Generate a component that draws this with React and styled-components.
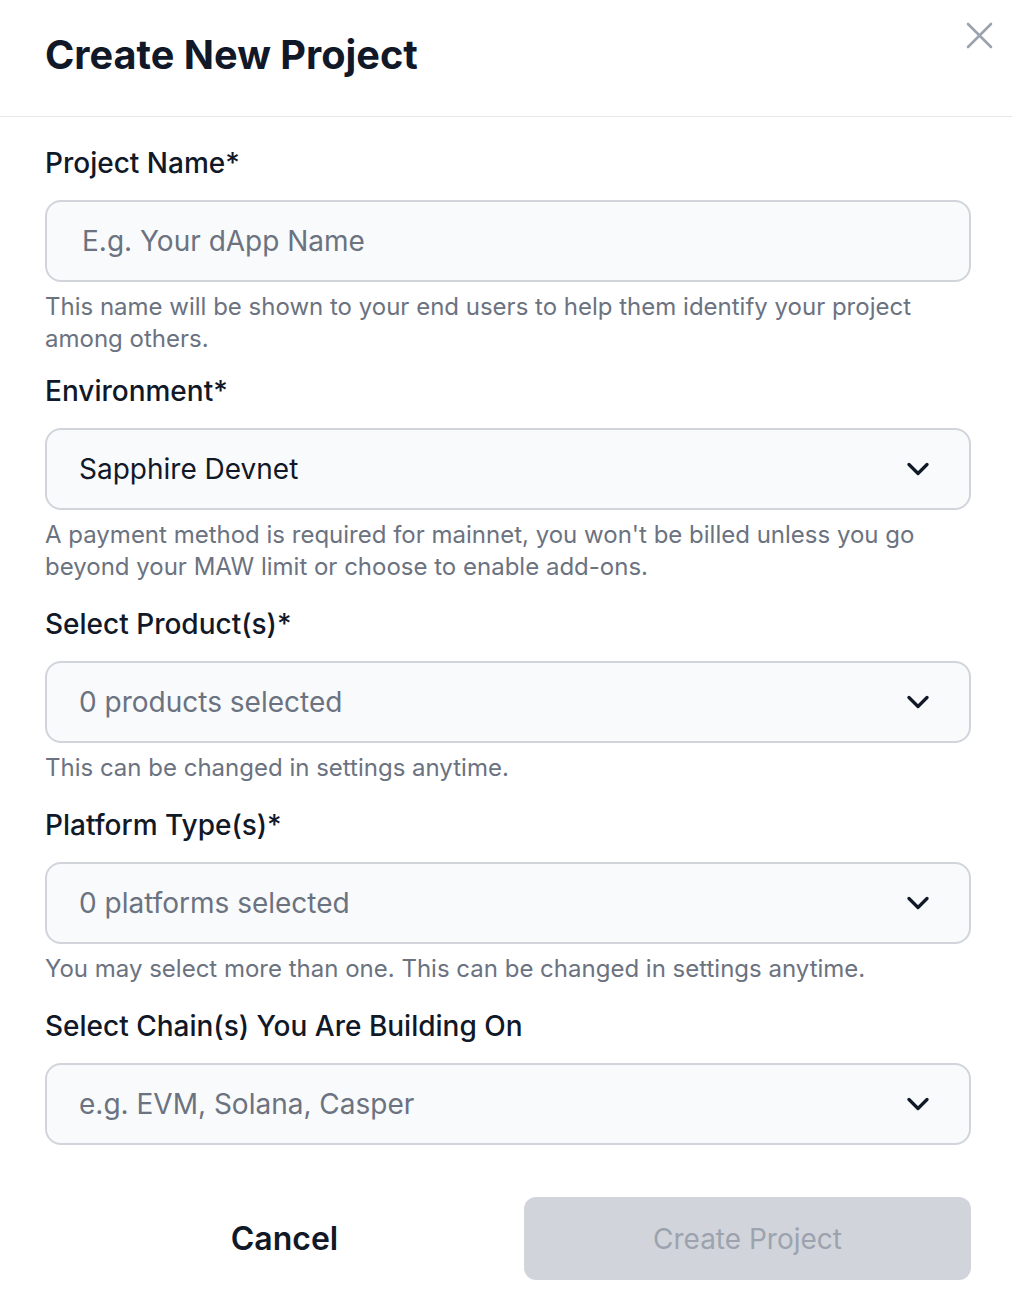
import React from 'react';
import styled, { createGlobalStyle } from 'styled-components';

const GlobalStyle = createGlobalStyle`
    body {
        margin: 0;
        background: #ffffff;
        font-family: Inter, "Noto Sans", sans-serif;
        color: #111827;
    }
`

const Modal = styled.div`
    width: 1012px;
    min-height: 1308px;
    background: #ffffff;
`

const Header = styled.header`
    height: 116px;
    border-bottom: 1px solid #e5e7eb;
    display: flex;
    justify-content: space-between;
    padding: 0 18px 0 45px;
    box-sizing: content-box;

    h1 {
        margin: 0 0 6px;
        align-self: center;
        font-size: 39.7px;
        line-height: 48px;
        font-weight: 700;
        color: #111827;
    }
`

const CloseButton = styled.button`
    margin-top: 21px;
    width: 29px;
    height: 29px;
    padding: 0;
    border: none;
    background: transparent;
    cursor: pointer;
    display: flex;
`

const Body = styled.div`
    padding: 30px 41px 0 45px;
    display: flex;
    flex-direction: column;
`

const Field = styled.div`
    display: flex;
    flex-direction: column;
    margin-bottom: ${({ $gap }) => $gap}px;
`

const Label = styled.label`
    font-size: 28px;
    line-height: 32px;
    font-weight: 500;
    color: #111827;
    margin-bottom: 21px;
`

const Box = styled.div`
    height: 82px;
    box-sizing: border-box;
    border: 2px solid #d1d5db;
    border-radius: 16px;
    background: #f9fafb;
    display: flex;
    align-items: center;
    justify-content: space-between;
    padding: 0 40px 0 ${({ $input }) => ($input ? 35 : 32)}px;
    font-size: 28px;
    color: ${({ $muted }) => ($muted ? '#6b7280' : '#111827')};
`

const Helper = styled.p`
    margin: 9px 0 0;
    font-size: 24px;
    line-height: 32px;
    color: #6b7280;
`

const Actions = styled.div`
    display: grid;
    grid-template-columns: 479px 447px;
    margin-top: 52px;
    height: 83px;
`

const Button = styled.button`
    border: none;
    border-radius: 12px;
    font-family: inherit;
    font-size: ${({ $primary }) => ($primary ? 28 : 32)}px;
    font-weight: ${({ $primary }) => ($primary ? 400 : 600)};
    background: ${({ $primary }) => ($primary ? '#d1d5db' : 'transparent')};
    color: ${({ $primary }) => ($primary ? '#9ca3af' : '#111827')};
    cursor: ${({ $primary }) => ($primary ? 'not-allowed' : 'pointer')};
`

const Chevron = () => (
    <svg width="22" height="14" viewBox="0 0 22 14" fill="none">
        <path d="M2 2.5l9 9 9-9" stroke="#111827" strokeWidth="3.2" strokeLinecap="round" strokeLinejoin="round" />
    </svg>
)

const CloseIcon = () => (
    <svg width="29" height="29" viewBox="0 0 29 29" fill="none">
        <path d="M3 3l23 23M26 3L3 26" stroke="#9ca3af" strokeWidth="2.6" strokeLinecap="round" />
    </svg>
)

const fields = [
    {
        label: 'Project Name*',
        value: 'E.g. Your dApp Name',
        muted: true,
        input: true,
        help: 'This name will be shown to your end users to help them identify your project among others.',
        gap: 20,
    },
    {
        label: 'Environment*',
        value: 'Sapphire Devnet',
        help: "A payment method is required for mainnet, you won't be billed unless you go beyond your MAW limit or choose to enable add-ons.",
        gap: 25,
    },
    {
        label: 'Select Product(s)*',
        value: '0 products selected',
        muted: true,
        help: 'This can be changed in settings anytime.',
        gap: 25,
    },
    {
        label: 'Platform Type(s)*',
        value: '0 platforms selected',
        muted: true,
        help: 'You may select more than one. This can be changed in settings anytime.',
        gap: 25,
    },
    {
        label: 'Select Chain(s) You Are Building On',
        value: 'e.g. EVM, Solana, Casper',
        muted: true,
        gap: 0,
    },
]

function App() {
    return (
        <Modal>
            <GlobalStyle />
            <Header>
                <h1>Create New Project</h1>
                <CloseButton aria-label="Close"><CloseIcon /></CloseButton>
            </Header>
            <Body>
                {fields.map((f) => (
                    <Field key={f.label} $gap={f.gap}>
                        <Label>{f.label}</Label>
                        <Box $muted={f.muted} $input={f.input}>
                            <span>{f.value}</span>
                            {!f.input && <Chevron />}
                        </Box>
                        {f.help && <Helper>{f.help}</Helper>}
                    </Field>
                ))}
                <Actions>
                    <Button>Cancel</Button>
                    <Button $primary disabled>Create Project</Button>
                </Actions>
            </Body>
        </Modal>
    )
}

export default App
